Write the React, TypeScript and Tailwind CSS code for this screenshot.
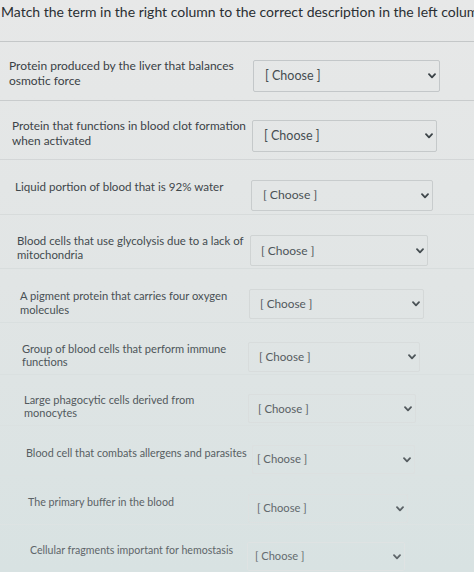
type Row = {
  lines: string[]
  row: string
  text: string
  box: string
  label: string
  chevron: string
}

// the photo is taken at an angle, so each row gets a little smaller and
// shifts right as we go down the page
const rows: Row[] = [
  {
    lines: ["Protein produced by the liver that balances", "osmotic force"],
    row: "h-[59px] pl-[9px] border-b border-[#c9cccd]",
    text: "w-[244px] pt-[16px] text-[12px] leading-[15px] text-[#3a4145]",
    box: "mt-[18px] w-[187px] h-[32px] border-[#c3c7c9] pl-[11px] pr-[3px]",
    label: "text-[12.5px] text-[#444c50]",
    chevron: "text-[#3a4247]",
  },
  {
    lines: ["Protein that functions in blood clot formation", "when activated"],
    row: "h-[59px] pl-[12px] border-b border-[#d3d6d7]",
    text: "w-[240px] pt-[17px] text-[11.8px] leading-[15px] text-[#3c4347]",
    box: "mt-[19px] w-[185px] h-[32px] border-[#c5c9ca] pl-[11px] pr-[3px]",
    label: "text-[12.5px] text-[#464e52]",
    chevron: "text-[#3c4448]",
  },
  {
    lines: ["Liquid portion of blood that is 92% water"],
    row: "h-[55px] pl-[15px] border-b border-[#d7dbdb]",
    text: "w-[236px] pt-[19px] text-[11.6px] leading-[15px] text-[#3f474b]",
    box: "mt-[20px] w-[182px] h-[31px] border-[#c8cccd] pl-[11px] pr-[3px]",
    label: "text-[12.2px] text-[#4a5256]",
    chevron: "text-[#40484c]",
  },
  {
    lines: ["Blood cells that use glycolysis due to a lack of", "mitochondria"],
    row: "h-[54px] pl-[17px] border-b border-[#d8dddd]",
    text: "w-[233px] pt-[19px] text-[11.4px] leading-[14px] text-[#434b4f]",
    box: "mt-[20px] w-[178px] h-[31px] border-[#cfd3d3] pl-[10px] pr-[3px]",
    label: "text-[12px] text-[#4e565a]",
    chevron: "text-[#454d51]",
  },
  {
    lines: ["A pigment protein that carries four oxygen", "molecules"],
    row: "h-[54px] pl-[20px] border-b border-[#d9dfdf]",
    text: "w-[229px] pt-[20px] text-[11.2px] leading-[14px] text-[#485054]",
    box: "mt-[20px] w-[175px] h-[30px] border-[#d4d8d8] pl-[10px] pr-[3px]",
    label: "text-[11.8px] text-[#52595d]",
    chevron: "text-[#4a5256]",
  },
  {
    lines: ["Group of blood cells that perform immune", "functions"],
    row: "h-[52px] pl-[22px] border-b border-[#dae0e0]",
    text: "w-[226px] pt-[19px] text-[11.1px] leading-[13px] text-[#4d5559]",
    box: "mt-[19px] w-[172px] h-[30px] border-[#d8dcdc] pl-[10px] pr-[3px]",
    label: "text-[11.6px] text-[#565d61]",
    chevron: "text-[#4e565a]",
  },
  {
    lines: ["Large phagocytic cells derived from", "monocytes"],
    row: "h-[51px] pl-[24px] border-b border-[#dbe1e1]",
    text: "w-[224px] pt-[18px] text-[11px] leading-[13px] text-[#52595d]",
    box: "mt-[19px] w-[168px] h-[29px] border-[#dadede] pl-[9px] pr-[3px]",
    label: "text-[11.4px] text-[#5a6165]",
    chevron: "text-[#52595d]",
  },
  {
    lines: ["Blood cell that combats allergens and parasites"],
    row: "h-[50px] pl-[26px] border-b border-[#dce2e2]",
    text: "w-[226px] pt-[20px] text-[10.8px] leading-[13px] text-[#575e62]",
    box: "mt-[19px] w-[163px] h-[29px] border-[#dce0e0] pl-[4px] pr-[3px]",
    label: "text-[11.3px] text-[#5e6569]",
    chevron: "text-[#575e62]",
  },
  {
    lines: ["The primary buffer in the blood"],
    row: "h-[49px] pl-[28px] border-b border-[#dde3e3]",
    text: "w-[220px] pt-[19px] text-[10.7px] leading-[13px] text-[#5b6266]",
    box: "mt-[18px] w-[160px] h-[29px] border-[#dde1e1] pl-[8px] pr-[3px]",
    label: "text-[11.2px] text-[#62696d]",
    chevron: "text-[#5b6266]",
  },
  {
    lines: ["Cellular fragments important for hemostasis"],
    row: "h-[49px] pl-[30px]",
    text: "w-[217px] pt-[19px] text-[10.6px] leading-[13px] text-[#5f666a]",
    box: "mt-[17px] w-[158px] h-[29px] border-[#dfe3e3] pl-[7px] pr-[3px]",
    label: "text-[11.1px] text-[#656c70]",
    chevron: "text-[#5f666a]",
  },
]

function Chevron({ className }: { className: string }) {
  return (
    <svg width="8" height="6" viewBox="0 0 8 6" fill="none" className={`shrink-0 ${className}`}>
      <path d="M1 1.2 L4 4.4 L7 1.2" stroke="currentColor" strokeWidth="1.8" strokeLinecap="round" strokeLinejoin="round" />
    </svg>
  )
}

function ChooseBox({ r }: { r: Row }) {
  return (
    <div className={`flex items-center justify-between border rounded-[2px] shrink-0 ${r.box}`}>
      <span className={`whitespace-nowrap ${r.label}`}>[ Choose ]</span>
      <Chevron className={r.chevron} />
    </div>
  )
}

export default function App() {
  return (
    <div
      className="w-[474px] h-[572px] overflow-hidden bg-gradient-to-b from-[#e7e8e8] via-[#e1e5e5] to-[#d8e2e2]"
      style={{ fontFamily: "Lato, 'Open Sans', sans-serif" }}
    >
      <div className="h-[42px] border-b border-[#c4c7c8]">
        <h1 className="pl-[1px] pt-[2px] text-[14px] leading-[20px] text-[#2a2f33] whitespace-nowrap overflow-hidden">
          Match the term in the right column to the correct description in the left column
        </h1>
      </div>

      {rows.map((r, i) => (
        <div key={i} className={`flex items-start ${r.row}`}>
          <div className={`shrink-0 whitespace-nowrap ${r.text}`}>
            {r.lines.map((l, j) => (
              <div key={j}>{l}</div>
            ))}
          </div>
          <ChooseBox r={r} />
        </div>
      ))}
    </div>
  )
}
